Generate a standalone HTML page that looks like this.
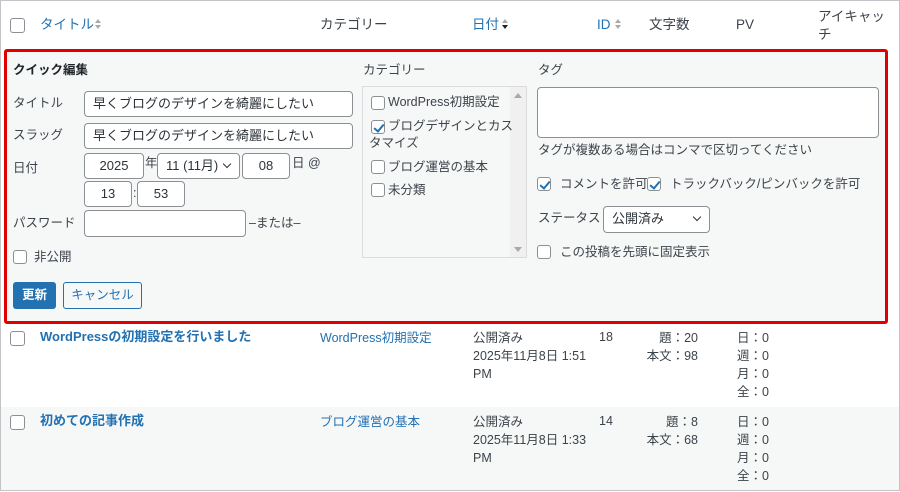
<!DOCTYPE html>
<html><head><meta charset="utf-8"><style>
*{box-sizing:border-box;margin:0;padding:0}
body{width:900px;height:492px;position:relative;background:#fff;font-family:"Liberation Sans","Noto Sans CJK JP",sans-serif;font-size:12.5px;color:#3c434a;overflow:hidden}
.a{position:absolute;white-space:nowrap;line-height:16px}
.cb{position:absolute;width:14px;height:14px;border:1px solid #8c8f94;border-radius:3px;background:#fff}
.cb.on::after{content:"";position:absolute;left:4px;top:1px;width:4px;height:8px;border:solid #2271b1;border-width:0 2px 2px 0;transform:rotate(40deg)}
.in{position:absolute;border:1px solid #8c8f94;border-radius:4px;background:#fff;font-size:13px;color:#2c3338;line-height:23px;padding-left:8px}
.blue{color:#2271b1}
.sort{position:absolute;width:6px;height:12px}
.sort::before{content:"";position:absolute;left:0;top:0;border:3px solid transparent;border-bottom:4px solid #a7aaad;border-top:0}
.sort::after{content:"";position:absolute;left:0;top:6px;border:3px solid transparent;border-top:4px solid #a7aaad;border-bottom:0}
.sort.d::after{border-top-color:#1d2327}
.chev{position:absolute;width:6px;height:6px;border:solid #2c3338;border-width:0 1.6px 1.6px 0;transform:rotate(45deg)}
</style></head><body>
<div style="position:absolute;left:0;top:0;width:900px;height:491px;border:1px solid #c3c4c7;border-bottom:none"></div>
<!-- header -->
<div class="cb" style="left:10px;top:18px;width:15px;height:15px"></div>
<div class="a blue" style="left:40px;top:17px;font-size:13.5px">タイトル</div><div class="sort" style="left:95px;top:19px"></div>
<div class="a" style="left:320px;top:17px;font-size:13.5px">カテゴリー</div>
<div class="a blue" style="left:472px;top:17px;font-size:13.5px">日付</div><div class="sort d" style="left:502px;top:19px"></div>
<div class="a blue" style="left:597px;top:17px;font-size:13.5px">ID</div><div class="sort" style="left:615px;top:19px"></div>
<div class="a" style="left:649px;top:17px;font-size:13.5px">文字数</div>
<div class="a" style="left:736px;top:17px;font-size:13.5px">PV</div>
<div class="a" style="left:818px;top:8px;font-size:13.5px;line-height:18px">アイキャッ<br>チ</div>

<!-- quick edit -->
<div style="position:absolute;left:4px;top:49px;width:884px;height:275px;background:#f6f7f7;border:3px solid #e00000;border-radius:3px"></div>
<div class="a" style="left:13px;top:62px;font-weight:bold;color:#1d2327">クイック編集</div>
<div class="a" style="left:13px;top:95px">タイトル</div>
<div class="in" style="left:84px;top:91px;width:269px;height:26px">早くブログのデザインを綺麗にしたい</div>
<div class="a" style="left:13px;top:127px">スラッグ</div>
<div class="in" style="left:84px;top:123px;width:269px;height:26px">早くブログのデザインを綺麗にしたい</div>
<div class="a" style="left:13px;top:160px">日付</div>
<div class="in" style="left:84px;top:153px;width:60px;height:26px;text-align:center;padding:0">2025</div>
<div class="a" style="left:145px;top:155px">年</div>
<div class="in" style="left:157px;top:153px;width:83px;height:26px">11 (11月)</div><div class="chev" style="left:224px;top:161px"></div>
<div class="in" style="left:242px;top:153px;width:48px;height:26px;text-align:center;padding:0">08</div>
<div class="a" style="left:292px;top:155px">日 @</div>
<div class="in" style="left:84px;top:181px;width:48px;height:26px;text-align:center;padding:0">13</div>
<div class="a" style="left:133px;top:185px">:</div>
<div class="in" style="left:137px;top:181px;width:48px;height:26px;text-align:center;padding:0">53</div>
<div class="a" style="left:13px;top:215px">パスワード</div>
<div class="in" style="left:84px;top:210px;width:162px;height:27px"></div>
<div class="a" style="left:249px;top:215px">–または–</div>
<div class="cb" style="left:13px;top:250px"></div>
<div class="a" style="left:34px;top:249px">非公開</div>
<div style="position:absolute;left:13px;top:282px;width:43px;height:27px;background:#2271b1;border-radius:3px;color:#fff;font-weight:bold;text-align:center;line-height:27px">更新</div>
<div style="position:absolute;left:63px;top:282px;width:79px;height:27px;background:#f6f7f7;border:1px solid #2271b1;border-radius:3px;color:#2271b1;text-align:center;line-height:25px">キャンセル</div>

<div class="a" style="left:363px;top:62px">カテゴリー</div>
<div style="position:absolute;left:362px;top:86px;width:165px;height:172px;border:1px solid #dcdcde;background:#f6f7f7"></div>
<div style="position:absolute;left:510px;top:87px;width:16px;height:170px;background:#f0f0f1"></div>
<div style="position:absolute;left:514px;top:93px;border:4px solid transparent;border-bottom:5px solid #a7aaad;border-top:0"></div>
<div style="position:absolute;left:514px;top:247px;border:4px solid transparent;border-top:5px solid #a7aaad;border-bottom:0"></div>
<div class="cb" style="left:371px;top:96px"></div><div class="a" style="left:388px;top:94px">WordPress初期設定</div>
<div class="cb on" style="left:371px;top:120px"></div><div class="a" style="left:388px;top:118px">ブログデザインとカス</div>
<div class="a" style="left:369px;top:135px">タマイズ</div>
<div class="cb" style="left:371px;top:160px"></div><div class="a" style="left:388px;top:159px">ブログ運営の基本</div>
<div class="cb" style="left:371px;top:183px"></div><div class="a" style="left:388px;top:182px">未分類</div>

<div class="a" style="left:538px;top:62px">タグ</div>
<div class="in" style="left:537px;top:87px;width:342px;height:51px"></div>
<div class="a" style="left:538px;top:142px">タグが複数ある場合はコンマで区切ってください</div>
<div class="cb on" style="left:537px;top:177px"></div><div class="a" style="left:560px;top:176px">コメントを許可</div>
<div class="cb on" style="left:647px;top:177px"></div><div class="a" style="left:670px;top:176px">トラックバック/ピンバックを許可</div>
<div class="a" style="left:538px;top:210px">ステータス</div>
<div class="in" style="left:603px;top:206px;width:107px;height:27px">公開済み</div><div class="chev" style="left:694px;top:214px"></div>
<div class="cb" style="left:537px;top:245px"></div><div class="a" style="left:560px;top:244px">この投稿を先頭に固定表示</div>

<!-- rows -->
<div style="position:absolute;left:1px;top:407px;width:898px;height:83px;background:#f6f7f7"></div>
<div class="cb" style="left:10px;top:331px;width:15px;height:15px"></div>
<div class="a blue" style="left:40px;top:329px;font-weight:bold;font-size:13px">WordPressの初期設定を行いました</div>
<div class="a blue" style="left:320px;top:330px">WordPress初期設定</div>
<div class="a" style="left:473px;top:329px;line-height:18px">公開済み<br>2025年11月8日 1:51<br>PM</div>
<div class="a" style="left:599px;top:329px">18</div>
<div class="a" style="left:620px;width:78px;text-align:right;top:329px;line-height:18px">題：20<br>本文：98</div>
<div class="a" style="left:737px;top:329px;line-height:18px">日：0<br>週：0<br>月：0<br>全：0</div>

<div class="cb" style="left:10px;top:415px;width:15px;height:15px"></div>
<div class="a blue" style="left:40px;top:413px;font-weight:bold;font-size:13px">初めての記事作成</div>
<div class="a blue" style="left:320px;top:414px">ブログ運営の基本</div>
<div class="a" style="left:473px;top:413px;line-height:18px">公開済み<br>2025年11月8日 1:33<br>PM</div>
<div class="a" style="left:599px;top:413px">14</div>
<div class="a" style="left:620px;width:78px;text-align:right;top:413px;line-height:18px">題：8<br>本文：68</div>
<div class="a" style="left:737px;top:413px;line-height:18px">日：0<br>週：0<br>月：0<br>全：0</div>
<div style="position:absolute;left:0;top:490px;width:900px;height:1px;background:#c3c4c7"></div>
</body></html>
